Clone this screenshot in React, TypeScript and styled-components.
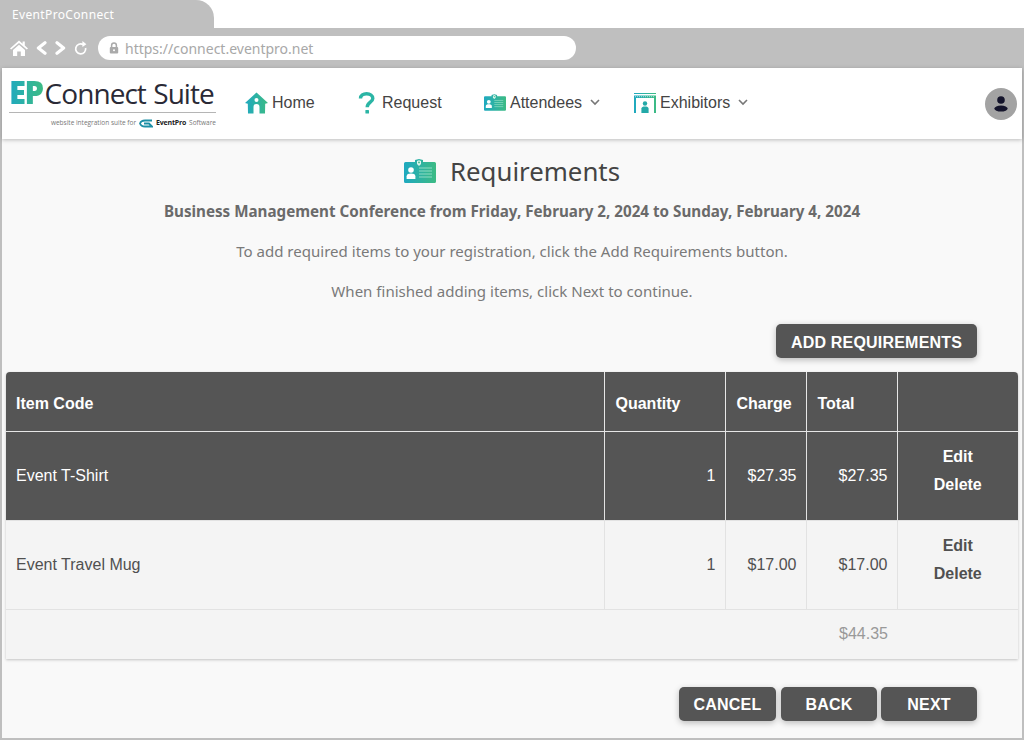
import React from "react"
import styled, {createGlobalStyle} from "styled-components"

const GlobalStyle = createGlobalStyle`
  html, body {
    margin: 0;
    padding: 0;
    background: #fff;
    font-family: "Liberation Sans", Arial, sans-serif;
  }
`

const brandGradient = "linear-gradient(90deg, #1fa9c0, #3dbb84)"

const HomeIcon = () => (
    <svg width="23" height="22" viewBox="0 0 23 22">
        <defs>
            <linearGradient id="homeGrad" x1="0" y1="0" x2="1" y2="0">
                <stop offset="0" stopColor="#1fa9c0"/>
                <stop offset="1" stopColor="#3dbb84"/>
            </linearGradient>
        </defs>
        <path fill="url(#homeGrad)" fillRule="evenodd"
              d="M11.5 0.5 L23 11 L20.2 11.8 L20 21.5 L14.5 21.5 L14.5 15 A3 3 0 0 0 8.5 15 L8.5 21.5 L3 21.5 L2.8 11.8 L0 11 Z M11.5 6 A2 2 0 1 0 11.5 10 A2 2 0 1 0 11.5 6 Z"/>
    </svg>
)

const QuestionIcon = () => (
    <svg width="18" height="22" viewBox="0 0 18 22">
        <path fill="none" stroke="#2bb5a5" strokeWidth="3.4"
              d="M2.5 6.5 C2.5 3.4 5.2 1.8 8.6 1.8 C12.2 1.8 14.8 3.6 14.8 6.4 C14.8 10.2 9.2 10.2 9.2 15.2"/>
        <rect x="7.4" y="18" width="3.6" height="3.6" rx="0.6" fill="#2bb5a5"/>
    </svg>
)

const BadgeIcon = ({width, height, id}: { width: number, height: number, id: string }) => (
    <svg width={width} height={height} viewBox="0 0 32 24">
        <defs>
            <linearGradient id={id} x1="0" y1="0" x2="1" y2="0">
                <stop offset="0" stopColor="#1fa9c0"/>
                <stop offset="1" stopColor="#3dbb84"/>
            </linearGradient>
        </defs>
        <path fill={`url(#${id})`}
              d="M1.5 3 H11 V1 L15 0 L19 1 V3 H30.5 A1.5 1.5 0 0 1 32 4.5 V22.5 A1.5 1.5 0 0 1 30.5 24 H1.5 A1.5 1.5 0 0 1 0 22.5 V4.5 A1.5 1.5 0 0 1 1.5 3 Z"/>
        <path fill="#dff5ee" d="M13 2 L15 1.2 L17 2 V5 L15 7 L13 5 Z"/>
        <circle cx="15" cy="3.4" r="0.9" fill="#3dbb84"/>
        <circle cx="7" cy="11" r="2.8" fill="#fff"/>
        <path fill="#fff" d="M2.6 20 V17.2 C2.6 15 4.5 14.4 7 14.4 C9.5 14.4 11.4 15 11.4 17.2 V20 Z"/>
        <path stroke="#8fdcc4" strokeWidth="1" d="M15 9 H28 M15 12 H28 M15 15 H28 M15 18 H28"/>
    </svg>
)

const ExhibitorIcon = () => (
    <svg width="22" height="20" viewBox="0 0 22 20">
        <defs>
            <linearGradient id="exhGrad" x1="0" y1="0" x2="1" y2="0">
                <stop offset="0" stopColor="#1fa9c0"/>
                <stop offset="1" stopColor="#3dbb84"/>
            </linearGradient>
        </defs>
        <path fill="url(#exhGrad)" d="M0 0 H22 V1 H0 Z M0 2.5 H22 V5 H0 Z M0 5 H2 V20 H0 Z M20 5 H22 V20 H20 Z"/>
        <path stroke="#fff" strokeWidth="0.6" strokeDasharray="1 1" d="M1 3.7 H21"/>
        <circle cx="11" cy="10.5" r="2.2" fill="#23a9a8"/>
        <path fill="#23a9a8" d="M7.4 20 V15.5 C7.4 14 9 13.4 11 13.4 C13 13.4 14.6 14 14.6 15.5 V20 Z"/>
    </svg>
)

const Chevron = () => (
    <svg width="10" height="7" viewBox="0 0 10 7">
        <path d="M1 1 L5 5 L9 1" fill="none" stroke="#777" strokeWidth="1.6"/>
    </svg>
)

const BrowserHomeIcon = () => (
    <svg width="18" height="16" viewBox="0 0 18 16">
        <path fill="#fff"
              d="M9 0.5 L12.6 3.7 V1.5 H14.8 V5.6 L18 8.4 L16.8 9.6 L9 2.9 L1.2 9.6 L0 8.4 Z M3 10 L9 4.8 L15 10 V16 H10.8 V11.5 H7.2 V16 H3 Z"/>
    </svg>
)

const BackIcon = () => (
    <svg width="11" height="14" viewBox="0 0 11 14">
        <path d="M9 1.8 L2.4 7 L9 12.2" fill="none" stroke="#fff" strokeWidth="3.2" strokeLinecap="round"
              strokeLinejoin="round"/>
    </svg>
)

const ForwardIcon = () => (
    <svg width="11" height="14" viewBox="0 0 11 14">
        <path d="M2 1.8 L8.6 7 L2 12.2" fill="none" stroke="#fff" strokeWidth="3.2" strokeLinecap="round"
              strokeLinejoin="round"/>
    </svg>
)

const ReloadIcon = () => (
    <svg width="14" height="15" viewBox="0 0 14 15">
        <path d="M11.6 7 A5 5 0 1 1 9.2 3.6" fill="none" stroke="#fff" strokeWidth="1.7"/>
        <path d="M8.4 0 L12.4 3.2 L8.4 6 Z" fill="#fff"/>
    </svg>
)

const LockIcon = () => (
    <svg width="10" height="12" viewBox="0 0 10 12">
        <path d="M2.6 5.4 V3.4 A2.4 2.4 0 0 1 7.4 3.4 V5.4" fill="none" stroke="#aaa" strokeWidth="1.5"/>
        <rect x="0.8" y="5" width="8.4" height="6.6" rx="1" fill="#aaa"/>
        <circle cx="5" cy="8.2" r="1" fill="#fff"/>
    </svg>
)

const UserIcon = () => (
    <svg width="14" height="16" viewBox="0 0 14 16">
        <circle cx="7" cy="4" r="3.8" fill="#14142b"/>
        <ellipse cx="7" cy="12.6" rx="6.6" ry="3" fill="#14142b"/>
    </svg>
)

const Frame = styled.div`
  width: 1024px;
  height: 740px;
  display: flex;
  flex-direction: column;
  overflow: hidden;
  box-sizing: border-box;
`
const TabStrip = styled.div`
  height: 28px;
  display: flex;
  background: #fff;
`
const Tab = styled.div`
  width: 202px;
  padding-left: 12px;
  background: #bfbfbf;
  border-top-right-radius: 18px;
  color: #fff;
  font: 12px/29px "Noto Sans", sans-serif;
  letter-spacing: 0.35px;
`
const AddressRow = styled.div`
  height: 40px;
  background: #bfbfbf;
  display: flex;
  align-items: center;
  padding-left: 10px;
`
const BrowserControls = styled.div`
  display: flex;
  align-items: center;
  gap: 8px;
  margin-right: 10px;
`
const UrlBar = styled.div`
  width: 478px;
  height: 24px;
  border-radius: 12px;
  background: #fff;
  display: flex;
  align-items: center;
  gap: 6px;
  padding-left: 11px;
  box-sizing: border-box;
  color: #a8a8a8;
  font: 14px "Noto Sans", sans-serif;
`
const Page = styled.div`
  flex: 1;
  display: flex;
  flex-direction: column;
  min-height: 0;
  border: 2px solid #bfbfbf;
  border-top: 0;
  background: #f9f9f9;
`
const Header = styled.header`
  height: 71px;
  flex: none;
  background: #fff;
  display: flex;
  align-items: center;
  box-shadow: 0 1px 4px rgba(0, 0, 0, .25);
  padding: 0 5px 0 7px;
`
const Logo = styled.div`
  width: 207px;
  margin-right: 29px;
  display: flex;
  flex-direction: column;
  padding-top: 2px;
`
const LogoTop = styled.div`
  display: flex;
  align-items: baseline;
  height: 31px;
  border-bottom: 1px solid #b5b5b5;
  white-space: nowrap;
`
const LogoMark = styled.span`
  font: 800 31px/23px "Open Sans", sans-serif;
  letter-spacing: -1.5px;
  background: ${brandGradient};
  -webkit-background-clip: text;
  background-clip: text;
  color: transparent;
  margin-right: 2px;
  padding-bottom: 6px;
`
const LogoName = styled.span`
  font: 28px/23px "Open Sans", sans-serif;
  letter-spacing: -0.95px;
  word-spacing: 1px;
  color: #2a2a36;
`
const LogoTag = styled.div`
  display: flex;
  justify-content: flex-end;
  align-items: center;
  gap: 3px;
  margin-top: 5px;
  font: 6.5px/10px "Open Sans", sans-serif;
  color: #777;
  white-space: nowrap;
`
const LogoPro = styled.b`
  color: #222;
  font-size: 7px;
  letter-spacing: -0.2px;
`
const Nav = styled.nav`
  display: flex;
  align-items: center;
  flex: 1;
  margin-top: -2px;
`
const NavItem = styled.a<{ $width: number, $gap: number }>`
  width: ${p => p.$width}px;
  display: flex;
  align-items: center;
  gap: ${p => p.$gap}px;
  font-size: 16px;
  color: #444;
`
const NavChevron = styled.span`
  display: flex;
  margin-left: 4px;
`
const Avatar = styled.div`
  width: 32px;
  height: 32px;
  border-radius: 50%;
  background: #a3a3a3;
  display: flex;
  align-items: center;
  justify-content: center;
`
const Main = styled.main`
  flex: 1;
  padding: 0 4px;
  display: flex;
  flex-direction: column;
  min-height: 0;
`
const TitleRow = styled.div`
  display: flex;
  justify-content: center;
  align-items: center;
  gap: 14px;
  height: 32px;
  margin-top: 16px;
`
const Title = styled.h1`
  margin: 0;
  font: 25.8px/32px "Noto Sans", sans-serif;
  color: #444;
`
const EventLine = styled.div`
  margin-top: 14px;
  text-align: center;
  font: bold 15.2px/20px "Noto Sans", sans-serif;
  color: #6a6a6a;
`
const Hint = styled.p`
  margin: 20px 0 0;
  text-align: center;
  font: 15.05px/20px "Noto Sans", sans-serif;
  color: #7a7a7a;
`
const ButtonRow = styled.div<{ $gap?: number, $top: number }>`
  display: flex;
  justify-content: flex-end;
  gap: ${p => p.$gap ?? 0}px;
  margin-top: ${p => p.$top}px;
  padding-right: 41px;
`
const Button = styled.button<{ $width: number }>`
  width: ${p => p.$width}px;
  height: 34px;
  border: 0;
  border-radius: 5px;
  background: #555;
  color: #fff;
  font: bold 16px "Liberation Sans", Arial, sans-serif;
  letter-spacing: 0.2px;
  padding: 2px 0 0;
  box-shadow: 0 2px 6px rgba(0, 0, 0, .25);
`
const AddButton = styled(Button)`
  padding-top: 4px;
`
const CancelButton = styled(Button)`
  margin-right: 1px;
`
const TableCard = styled.div`
  margin-top: 14px;
  border-radius: 4px 4px 0 0;
  overflow: hidden;
  box-shadow: 0 1px 3px rgba(0, 0, 0, .22);
`
const Table = styled.table`
  width: 1012px;
  border-collapse: collapse;
  table-layout: fixed;
  font-size: 16px;
`
const HeadCell = styled.th<{ $width?: number }>`
  box-sizing: border-box;
  width: ${p => p.$width ? `${p.$width}px` : "auto"};
  height: 59px;
  padding: 6px 9px 0 11px;
  background: #555;
  color: #fff;
  font-weight: bold;
  text-align: left;
  border-left: 1px solid #e6e6e6;
  border-bottom: 1px solid #e6e6e6;

  &:first-child {
    border-left: 0;
    padding-left: 10px;
  }
`
const Row = styled.tr<{ $selected?: boolean }>`
  background: ${p => p.$selected ? "#555" : "#f4f4f4"};
  color: ${p => p.$selected ? "#fff" : "#505050"};
`
const Cell = styled.td<{ $right?: boolean }>`
  height: 88px;
  padding: 0 9px 0 11px;
  text-align: ${p => p.$right ? "right" : "left"};
  border-left: 1px solid #e2e2e2;
  border-bottom: 1px solid #e2e2e2;

  &:first-child {
    border-left: 0;
    padding-left: 10px;
  }
`
const ActionCell = styled(Cell)`
  text-align: center;
  font-weight: bold;
  padding: 0 10px 10px;
  box-sizing: border-box;
`
const ActionLink = styled.div`
  line-height: 28px;
`
const TotalRow = styled.tr`
  background: #f4f4f4;
`
const TotalCell = styled.td`
  height: 50px;
  padding: 0 9px 1px 10px;
  box-sizing: border-box;
  text-align: right;
  color: #999;
`

const items = [
    {name: "Event T-Shirt", quantity: 1, charge: "$27.35", total: "$27.35", selected: true},
    {name: "Event Travel Mug", quantity: 1, charge: "$17.00", total: "$17.00", selected: false},
]

export default function App() {
    return (
        <Frame>
            <GlobalStyle/>
            <TabStrip>
                <Tab>EventProConnect</Tab>
            </TabStrip>
            <AddressRow>
                <BrowserControls>
                    <BrowserHomeIcon/>
                    <BackIcon/>
                    <ForwardIcon/>
                    <ReloadIcon/>
                </BrowserControls>
                <UrlBar>
                    <LockIcon/>
                    https://connect.eventpro.net
                </UrlBar>
            </AddressRow>
            <Page>
                <Header>
                    <Logo>
                        <LogoTop>
                            <LogoMark>EP</LogoMark>
                            <LogoName>Connect Suite</LogoName>
                        </LogoTop>
                        <LogoTag>
                            website integration suite for
                            <svg width="14" height="9" viewBox="0 0 14 9">
                                <path d="M13 1.5 H6 C3 1.5 1.5 3 1 4.5 C1.5 6 3 7.5 6 7.5 H13 L10 4.5 H5"
                                      fill="none" stroke="#1d8fa6" strokeWidth="1.8"/>
                            </svg>
                            <LogoPro>EventPro</LogoPro>
                            Software
                        </LogoTag>
                    </Logo>
                    <Nav>
                        <NavItem $width={113} $gap={4}><HomeIcon/>Home</NavItem>
                        <NavItem $width={126} $gap={6}><QuestionIcon/>Request</NavItem>
                        <NavItem $width={150} $gap={4}>
                            <BadgeIcon width={22} height={17} id="navBadge"/>Attendees
                            <NavChevron><Chevron/></NavChevron>
                        </NavItem>
                        <NavItem $width={130} $gap={4}>
                            <ExhibitorIcon/>Exhibitors
                            <NavChevron><Chevron/></NavChevron>
                        </NavItem>
                    </Nav>
                    <Avatar><UserIcon/></Avatar>
                </Header>
                <Main>
                    <TitleRow>
                        <BadgeIcon width={32} height={24} id="titleBadge"/>
                        <Title>Requirements</Title>
                    </TitleRow>
                    <EventLine>Business Management Conference from Friday, February 2, 2024 to Sunday, February 4, 2024</EventLine>
                    <Hint>To add required items to your registration, click the Add Requirements button.</Hint>
                    <Hint>When finished adding items, click Next to continue.</Hint>
                    <ButtonRow $top={23}>
                        <AddButton $width={201}>ADD REQUIREMENTS</AddButton>
                    </ButtonRow>
                    <TableCard>
                        <Table>
                            <thead>
                            <tr>
                                <HeadCell>Item Code</HeadCell>
                                <HeadCell $width={121}>Quantity</HeadCell>
                                <HeadCell $width={81}>Charge</HeadCell>
                                <HeadCell $width={91}>Total</HeadCell>
                                <HeadCell $width={121}/>
                            </tr>
                            </thead>
                            <tbody>
                            {items.map(item => (
                                <Row key={item.name} $selected={item.selected}>
                                    <Cell>{item.name}</Cell>
                                    <Cell $right>{item.quantity}</Cell>
                                    <Cell $right>{item.charge}</Cell>
                                    <Cell $right>{item.total}</Cell>
                                    <ActionCell>
                                        <ActionLink>Edit</ActionLink>
                                        <ActionLink>Delete</ActionLink>
                                    </ActionCell>
                                </Row>
                            ))}
                            <TotalRow>
                                <TotalCell colSpan={4}>$44.35</TotalCell>
                                <TotalCell/>
                            </TotalRow>
                            </tbody>
                        </Table>
                    </TableCard>
                    <ButtonRow $top={28} $gap={4}>
                        <CancelButton $width={97}>CANCEL</CancelButton>
                        <Button $width={96}>BACK</Button>
                        <Button $width={96}>NEXT</Button>
                    </ButtonRow>
                </Main>
            </Page>
        </Frame>
    )
}
